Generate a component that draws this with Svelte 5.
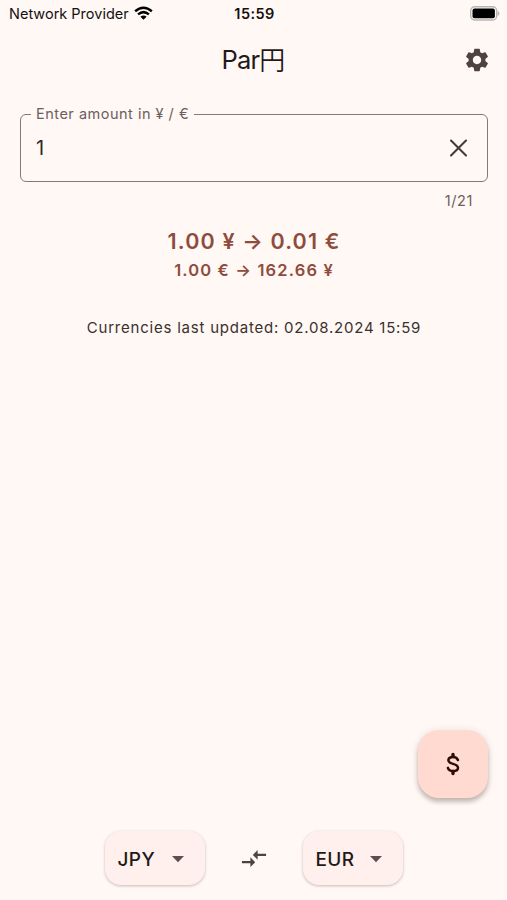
<script>
  let amount = $state('1');
</script>

<main class="screen">
  <header class="status">
    <div class="carrier">
      <span class="provider">Network Provider</span>
      <svg width="19" height="14" viewBox="0 0 20 14" fill="none" stroke="#000" stroke-width="2.6">
        <path d="M1.2 5.2Q10 -2.3 18.8 5.2" />
        <path d="M4.3 8.5Q10 3.6 15.7 8.5" />
        <path d="M10 14L6.7 10.9Q10 8.4 13.3 10.9Z" fill="#000" stroke="none" />
      </svg>
    </div>
    <span class="clock">15:59</span>
    <svg class="battery" width="31" height="15" viewBox="0 0 31 15">
      <rect x="1.7" y="0.8" width="26" height="13.2" rx="4" fill="#fff8f5" stroke="#b9b5b3" stroke-width="1.4" />
      <rect x="3.5" y="2.6" width="22.4" height="9.6" rx="2" fill="#000" />
      <path d="M28.6 5v5q1.9-.8 1.9-2.5T28.6 5Z" fill="#b9b5b3" />
    </svg>
  </header>

  <div class="appbar">
    <h1>Par<span class="yen">円</span></h1>
    <svg class="gear" width="28" height="28" viewBox="0 0 24 24" fill="#4f4341">
      <path d="M19.14 12.94c.04-.3.06-.61.06-.94 0-.32-.02-.64-.07-.94l2.03-1.58c.18-.14.23-.41.12-.61l-1.92-3.32c-.12-.22-.37-.29-.59-.22l-2.39.96c-.5-.38-1.03-.7-1.62-.94l-.36-2.54c-.04-.24-.24-.41-.48-.41h-3.84c-.24 0-.43.17-.47.41l-.36 2.54c-.59.24-1.13.57-1.62.94l-2.39-.96c-.22-.08-.47 0-.59.22L2.74 8.87c-.12.21-.08.47.12.61l2.03 1.58c-.05.3-.09.63-.09.94s.02.64.07.94l-2.03 1.58c-.18.14-.23.41-.12.61l1.92 3.32c.12.22.37.29.59.22l2.39-.96c.5.38 1.03.7 1.62.94l.36 2.54c.05.24.24.41.48.41h3.84c.24 0 .44-.17.47-.41l.36-2.54c.59-.24 1.13-.56 1.62-.94l2.39.96c.22.08.47 0 .59-.22l1.92-3.32c.12-.22.07-.47-.12-.61l-2.01-1.58zM12 15.6c-1.98 0-3.6-1.62-3.6-3.6s1.62-3.6 3.6-3.6 3.6 1.62 3.6 3.6-1.62 3.6-3.6 3.6z" />
    </svg>
  </div>

  <fieldset class="field">
    <legend>Enter amount in ¥ / €</legend>
    <div class="entry">
      <input bind:value={amount} maxlength="21" aria-label="Amount" />
      <svg width="20" height="20" viewBox="0 0 20 20" stroke="#453a38" stroke-width="2.1" stroke-linecap="round">
        <path d="M3 2.5L18 17.5M18 2.5L3 17.5" />
      </svg>
    </div>
  </fieldset>
  <div class="counter">{amount.length}/21</div>

  <section class="rates">
    <p class="primary"><span>1.00 ¥ → 0.01 €</span></p>
    <p class="secondary"><span>1.00 € → 162.66 ¥</span></p>
    <p class="updated"><span>Currencies last updated: 02.08.2024 15:59</span></p>
  </section>

  <div class="fab-row">
    <button class="fab" aria-label="Currency">
      <svg width="16" height="24" viewBox="0 0 16 24" fill="none" stroke="#2f0c06" stroke-width="2.5" stroke-linecap="round" stroke-linejoin="round">
        <path d="M8 2.4V4.5M8 19.5V21.6" stroke-width="3.4" />
        <path d="M12.9 8C12.2 6 10.4 5 8 5C5.2 5 3.4 6.3 3.4 8.3C3.4 10.5 5.2 11.2 8 11.9C11.2 12.7 13 13.6 13 15.8C13 17.9 11.1 19.1 8.2 19.1C5.4 19.1 3.4 17.8 2.9 15.9" />
      </svg>
    </button>
  </div>

  <footer class="pair">
    <button class="chip">
      <span class="jpy">JPY</span>
      <svg width="12" height="7" viewBox="0 0 12 7"><path d="M0 0H12L6 6.2Z" fill="#5c504e" /></svg>
    </button>
    <svg class="swap" width="30" height="29" viewBox="0 0 24 24" fill="#4f4341">
      <path d="M9.01 14H2v2h7.01v3L13 15l-3.99-4v3zm5.98-1v-3H22V8h-7.01V5L11 9l3.99 4z" />
    </svg>
    <button class="chip">
      <span class="eur">EUR</span>
      <svg width="12" height="7" viewBox="0 0 12 7"><path d="M0 0H12L6 6.2Z" fill="#5c504e" /></svg>
    </button>
  </footer>
</main>

<style>
  :global(body) {
    margin: 0;
    background: #fff8f5;
  }
  .screen {
    width: 507px;
    height: 900px;
    display: flex;
    flex-direction: column;
    background: #fff8f5;
    color: #231917;
    font-family: Inter, 'Noto Sans CJK JP', sans-serif;
    overflow: hidden;
  }
  svg {
    display: block;
    flex: none;
  }
  span, legend {
    white-space: nowrap;
  }
  .status {
    height: 28px;
    display: grid;
    grid-template-columns: 1fr auto 1fr;
    align-items: center;
    padding: 0 7px 2px 9px;
    box-sizing: border-box;
    color: #151110;
  }
  .carrier {
    display: flex;
    align-items: center;
    gap: 5px;
  }
  .provider {
    font-size: 14.5px;
    letter-spacing: 0;
  }
  .clock {
    font-size: 14.5px;
    font-weight: 600;
    letter-spacing: 0.4px;
  }
  .battery {
    justify-self: end;
  }
  .appbar {
    height: 64px;
    display: grid;
    grid-template-columns: 1fr auto 1fr;
    align-items: center;
    padding: 0 16px 0 15px;
  }
  h1 {
    grid-column: 2;
    margin: 0;
    display: flex;
    font-size: 25.5px;
    line-height: 36px;
    font-weight: 400;
    letter-spacing: -0.8px;
  }
  .yen {
    margin-top: -1px;
    font-family: 'Noto Sans CJK JP', sans-serif;
    font-size: 26px;
    font-weight: 350;
  }
  .gear {
    justify-self: end;
  }
  .field {
    height: 76px;
    box-sizing: border-box;
    margin: 14px 19.5px 0 20px;
    padding: 0 19px 0 10px;
    border: 1px solid #857a77;
    border-radius: 6px;
  }
  legend {
    padding: 0 5px;
    font-size: 14.5px;
    line-height: 16px;
    letter-spacing: 0.5px;
    color: #6b605d;
  }
  .entry {
    display: flex;
    align-items: center;
    justify-content: space-between;
    height: 52px;
    padding-left: 5px;
  }
  input {
    width: 300px;
    padding: 0;
    border: 0;
    outline: 0;
    background: transparent;
    font: 400 20px Inter, sans-serif;
    color: #332927;
  }
  .counter {
    margin-top: 10px;
    padding-right: 34px;
    text-align: right;
    font-size: 14.5px;
    line-height: 18px;
    letter-spacing: 0.6px;
    color: #6b605d;
  }
  .rates {
    display: flex;
    flex-direction: column;
    align-items: center;
    padding-left: 1px;
  }
  p {
    margin: 0;
  }
  .primary, .secondary {
    color: #8f4c3c;
    font-weight: 600;
  }
  .primary {
    margin-top: 15px;
    font-size: 21.5px;
    line-height: 32px;
    letter-spacing: 1.15px;
  }
  .secondary {
    margin-top: 1px;
    font-size: 16.5px;
    line-height: 24px;
    letter-spacing: 1.15px;
  }
  .updated {
    margin-top: 36px;
    font-size: 15px;
    line-height: 20px;
    letter-spacing: 0.78px;
    color: #3b302e;
  }
  .fab-row {
    margin-top: auto;
    display: flex;
    justify-content: flex-end;
    padding: 0 19px 33px 0;
  }
  button {
    border: 0;
    font: inherit;
    color: inherit;
  }
  .fab {
    width: 70px;
    height: 68px;
    padding: 0 1px 1px 0;
    display: grid;
    place-items: center;
    border-radius: 21px;
    background: #ffdad1;
    box-shadow: 0 4px 4px rgba(60, 30, 20, 0.24), 0 1px 8px rgba(60, 30, 20, 0.12);
  }
  .pair {
    display: flex;
    align-items: center;
    justify-content: center;
    gap: 34px;
    padding-bottom: 15px;
  }
  .swap {
    margin-top: 1px;
  }
  .chip {
    width: 100px;
    height: 54px;
    display: flex;
    align-items: center;
    justify-content: space-between;
    padding: 2px 21px 0 13px;
    border-radius: 16px;
    background: #fff0ed;
    box-shadow: 0 1px 3px rgba(60, 30, 20, 0.28);
    font-size: 19px;
    font-weight: 450;
    letter-spacing: 0.4px;
  }
</style>
